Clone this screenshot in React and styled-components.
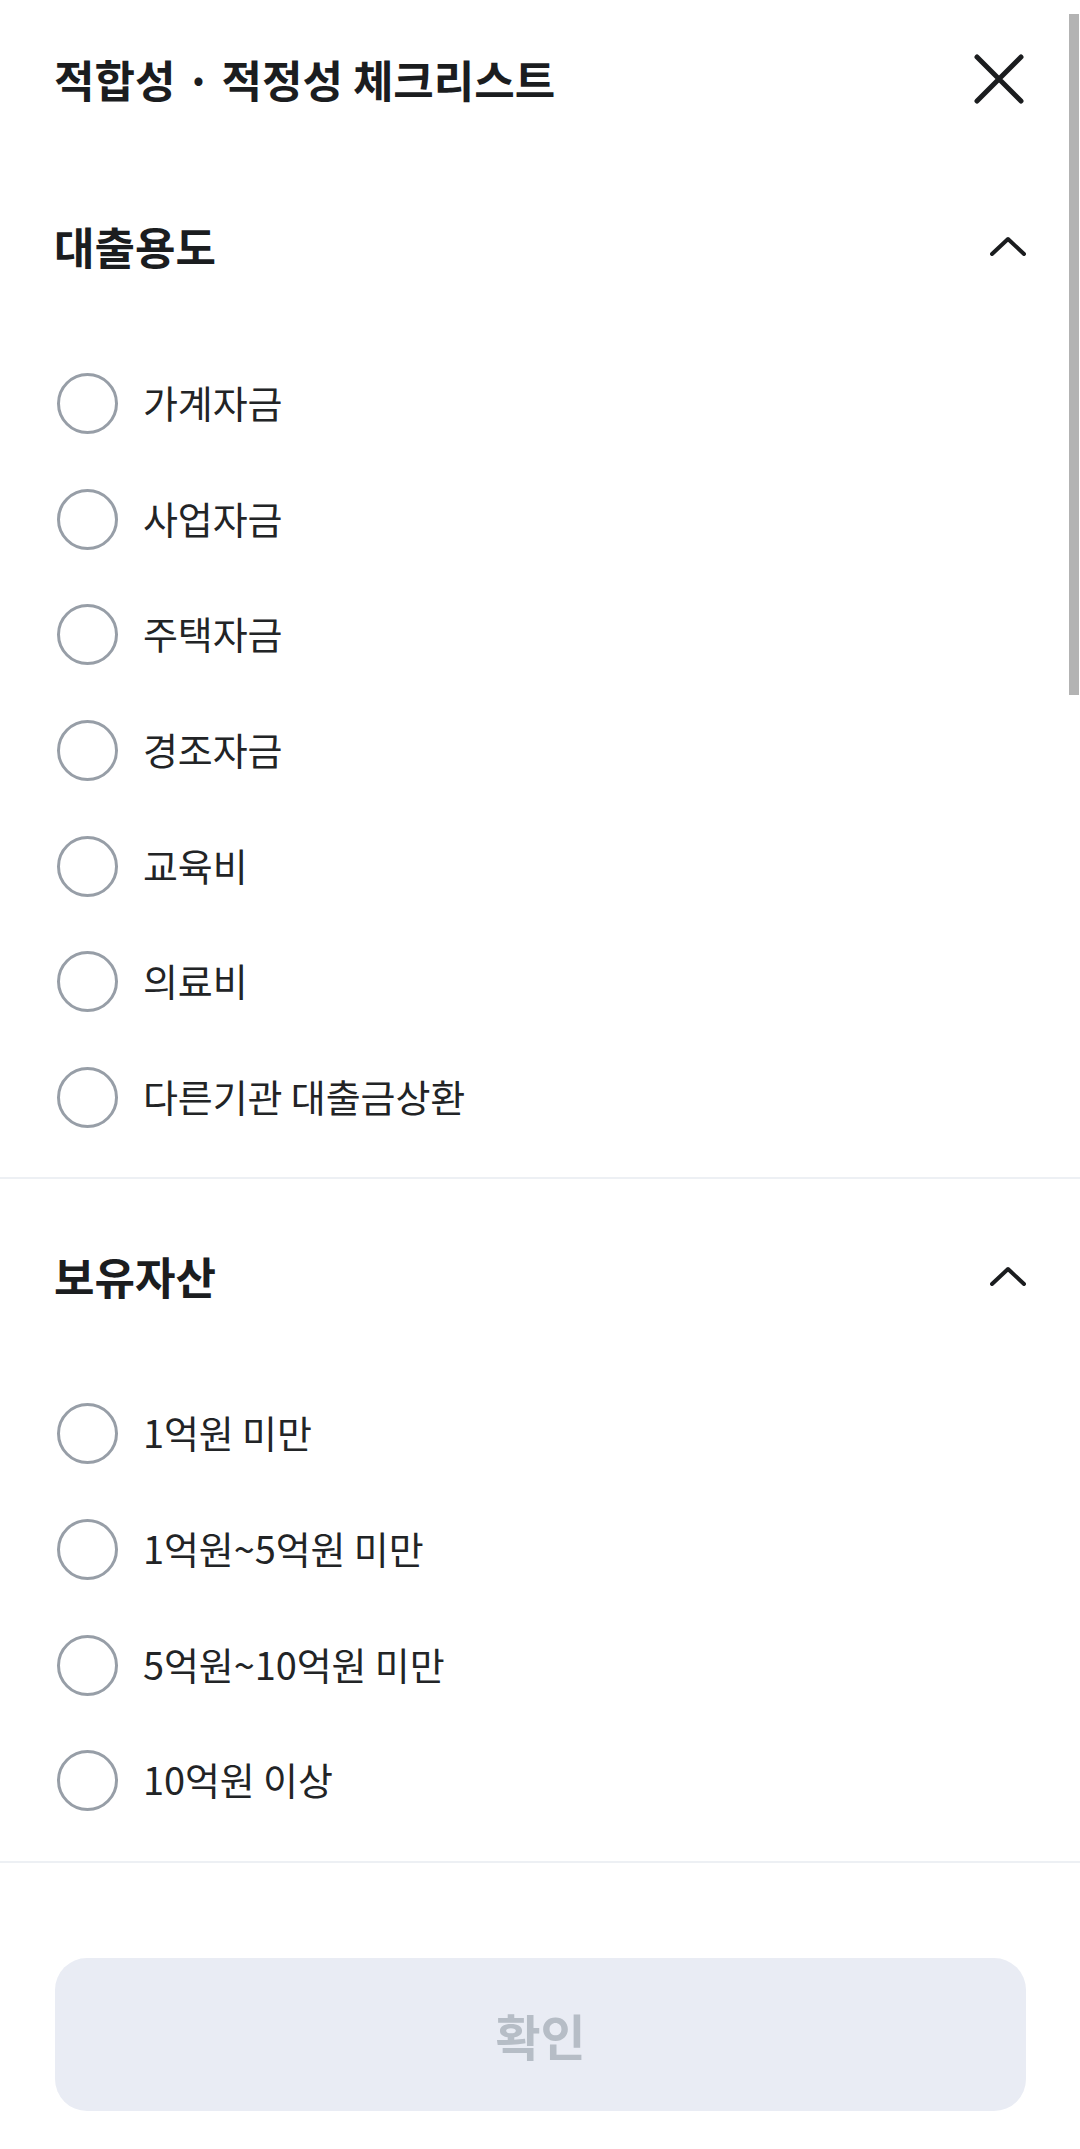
import React from "react";
import styled, { createGlobalStyle } from "styled-components";

const GlobalStyle = createGlobalStyle`
  html, body {
    margin: 0;
    padding: 0;
    background: #ffffff;
  }
  body {
    font-family: "Noto Sans CJK KR", "Noto Sans", sans-serif;
    color: #1b1d1f;
  }
  * { box-sizing: border-box; }
`;

const Page = styled.div`
  position: relative;
  width: 1080px;
  min-height: 2149px;
  background: #fff;
  display: flex;
  flex-direction: column;
`;

const Header = styled.header`
  height: 158px;
  display: flex;
  align-items: center;
  justify-content: space-between;
  padding: 0 56px 0 54px;
`;

const Title = styled.h1`
  margin: 0;
  font-size: 44px;
  font-weight: 700;
  letter-spacing: 0px;
  line-height: 1;
  color: #1b1d1f;
`;

const IconButton = styled.button`
  border: none;
  background: transparent;
  padding: 0;
  margin: 0;
  display: flex;
  align-items: center;
  justify-content: center;
  cursor: pointer;
`;

const Section = styled.section`
  padding-top: ${(p) => p.$top}px;
  padding-bottom: 22px;
  border-bottom: 2px solid #edf0f4;
`;

const SectionHeader = styled.div`
  height: 100px;
  display: flex;
  align-items: center;
  justify-content: space-between;
  padding: 0 54px 0 54px;
`;

const SectionTitle = styled.h2`
  margin: 0;
  font-size: 44px;
  font-weight: 700;
  line-height: 1;
  color: #1b1d1f;
`;

const OptionList = styled.ul`
  list-style: none;
  margin: 0;
  padding: 50px 55px 0 57px;
`;

const OptionRow = styled.li`
  height: 115.6px;
  display: flex;
  align-items: center;
  gap: 25px;
`;

const Radio = styled.span`
  width: 61px;
  height: 61px;
  border-radius: 50%;
  border: 3px solid #979ea7;
  flex: none;
  background: #fff;
`;

const OptionLabel = styled.span`
  font-size: 38px;
  font-weight: 400;
  line-height: 1;
  letter-spacing: -0.1px;
  color: #222426;
  margin-top: -3px;
`;

const Footer = styled.div`
  padding: 95px 54px 39px 55px;
`;

const ConfirmButton = styled.button`
  width: 100%;
  height: 153px;
  border: none;
  border-radius: 32px;
  background: #e9ecf4;
  color: #b6bdc6;
  font-family: "Noto Sans CJK KR", "Noto Sans", sans-serif;
  font-size: 49px;
  font-weight: 700;
  display: flex;
  align-items: center;
  justify-content: center;
`;

const ScrollThumb = styled.div`
  position: absolute;
  top: 14px;
  right: 1px;
  width: 10px;
  height: 681px;
  background: #b3b3b3;
`;

const CloseIcon = () => (
  <svg width="50" height="50" viewBox="0 0 50 50">
    <path d="M3 3 L47 47 M47 3 L3 47" stroke="#1b1d1f" strokeWidth="5" strokeLinecap="round" fill="none" />
  </svg>
);

const ChevronUp = () => (
  <svg width="36" height="20" viewBox="0 0 36 20">
    <polyline points="2,18 18,3 34,18" stroke="#1b1d1f" strokeWidth="4" strokeLinecap="round" strokeLinejoin="round" fill="none" />
  </svg>
);

const sections = [
  {
    title: "대출용도",
    top: 38,
    options: ["가계자금", "사업자금", "주택자금", "경조자금", "교육비", "의료비", "다른기관 대출금상환"],
  },
  {
    title: "보유자산",
    top: 47,
    options: ["1억원 미만", "1억원~5억원 미만", "5억원~10억원 미만", "10억원 이상"],
  },
];

export default function App() {
  return (
    <Page>
      <GlobalStyle />
      <Header>
        <Title>적합성 · 적정성 체크리스트</Title>
        <IconButton aria-label="닫기">
          <CloseIcon />
        </IconButton>
      </Header>
      {sections.map((s) => (
        <Section key={s.title} $top={s.top}>
          <SectionHeader>
            <SectionTitle>{s.title}</SectionTitle>
            <IconButton aria-label="접기">
              <ChevronUp />
            </IconButton>
          </SectionHeader>
          <OptionList>
            {s.options.map((o) => (
              <OptionRow key={o}>
                <Radio />
                <OptionLabel>{o}</OptionLabel>
              </OptionRow>
            ))}
          </OptionList>
        </Section>
      ))}
      <Footer>
        <ConfirmButton disabled>확인</ConfirmButton>
      </Footer>
      <ScrollThumb />
    </Page>
  );
}
